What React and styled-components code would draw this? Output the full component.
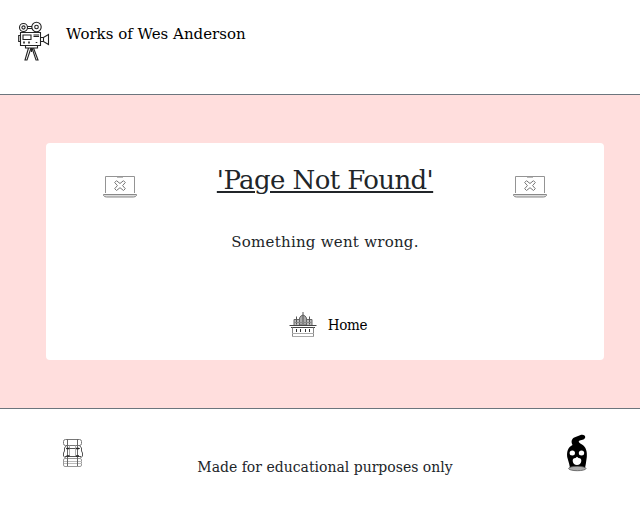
import React from "react";
import styled, { createGlobalStyle } from "styled-components";

const GlobalStyle = createGlobalStyle`
  * { box-sizing: border-box; }
  body {
    margin: 0;
    background: #fff;
    color: #212529;
    font-family: "DejaVu Serif", "Liberation Serif", serif;
  }
`;

const Page = styled.div`
  display: flex;
  flex-direction: column;
  height: 506px;
`;

const Header = styled.header`
  display: flex;
  align-items: flex-start;
  gap: 16px;
  height: 95px;
  padding: 21px 16px 0 18px;
  border-bottom: 1px solid #6c757d;
`;

const Brand = styled.a`
  margin-top: 1px;
  color: #000;
  font-size: 15px;
  line-height: 24px;
  white-space: nowrap;
`;

const Main = styled.main`
  height: 313px;
  padding: 48px 36px 48px 46px;
  background: #ffdedd;
`;

const Card = styled.section`
  display: flex;
  flex-direction: column;
  align-items: center;
  width: 558px;
  height: 217px;
  padding-top: 17px;
  border-radius: 4px;
  background: #fff;
`;

const TitleRow = styled.div`
  display: flex;
  justify-content: space-between;
  align-items: flex-start;
  width: 444px;
  height: 68px;
`;

const Title = styled.h1`
  margin: 0;
  font-size: 26px;
  font-weight: 400;
  line-height: 40px;
  letter-spacing: -0.6px;
  white-space: nowrap;
  text-decoration: underline;
  text-decoration-thickness: 2px;
  text-underline-offset: 2px;
`;

const IconSlot = styled.span`
  display: flex;
  padding-top: ${(p) => p.$top || 0}px;
`;

const Message = styled.p`
  margin: 2px 0 0;
  font-size: 15px;
  line-height: 24px;
  letter-spacing: 0.25px;
  white-space: nowrap;
`;

const HomeLink = styled.a`
  display: flex;
  gap: 11px;
  margin: 58px 0 0 6px;
  color: #000;
  font-family: "DejaVu Serif Condensed", "DejaVu Serif", serif;
  font-stretch: condensed;
  font-size: 15px;
  line-height: 26px;
  letter-spacing: -0.3px;
`;

const Footer = styled.footer`
  display: flex;
  justify-content: space-between;
  height: 98px;
  padding: 0 52px 0 62px;
  border-top: 1px solid #6c757d;
`;

const Notice = styled.p`
  margin: 48px 0 0;
  font-size: 14px;
  line-height: 21px;
  white-space: nowrap;
`;

const CameraIcon = () => (
  <svg width="32" height="40" viewBox="0 0 32 40" fill="none" stroke="#222" strokeWidth="1.1">
    <circle cx="5.500" cy="6.500" r="4" />
    <circle cx="5.500" cy="6.500" r="1.600" />
    <circle cx="18.500" cy="6" r="4.700" />
    <circle cx="18.500" cy="6" r="1.800" />
    <path d="M9.500 5.500h4.500M9.500 7.500h4.500M2.500 11.500H22.500v13H2.500zM2.500 14.500H.7v6h1.800M22.500 16.500h3l5-3v10l-5-3h-3M25.500 16.500v4" />
    <path d="M5 14h8v4.500H5zM15.500 14h5.500M15.500 15.500h5.500" />
    <path d="M7.500 24.500v2.500h12v-2.500M10.500 27 7 39h2l4-12M15.500 27l4.500 12h-2l-4-12M13.500 27v4" />
    <path d="M6 20.500v2M11 20.500v2M18.500 21v1" strokeWidth="1.600" />
  </svg>
);

const LaptopIcon = () => (
  <svg width="34" height="24" viewBox="0 0 34 24" fill="none" stroke="#888" strokeWidth="1">
    <path d="M2.500 18V1.500h29V18" strokeWidth=".9" />
    <path d="M.5 19.500h33v1q-1 1.500-3 1.500h-27q-2 0-3-1.500z" fill="#ddd" />
    <path d="M14 2.500h6" stroke="#bbb" />
    <path d="M11.700 7.500 13.500 5.700 17 8.500l3.500-2.800 1.800 1.800-2.700 3.100 2.700 3.100-1.800 1.800-3.500-2.800-3.500 2.800-1.800-1.800 2.700-3.100z" strokeLinejoin="round" stroke="#777" />
  </svg>
);

const HotelIcon = () => (
  <svg width="28" height="26" viewBox="0 0 28 26" fill="none" stroke="#666" strokeWidth="1">
    <path d="M5 7.500h18v6H5z" fill="#bbb" />
    <path d="M10.500 13V6q1-2.500 3.500-3 2.500.5 3.500 3v7z" fill="#aaa" />
    <path d="M14 0v12M7.500 4.500v8M20.500 4.500v8" stroke="#555" />
    <path d="M5 10.500h18" stroke="#888" />
    <path d="M.5 13.500h27M2 15.500h24" stroke="#444" />
    <path d="M3.500 15.500v9h21v-9" stroke="#888" />
    <path d="M7.500 17v3M11.500 17v3M16.500 17v3M20.500 17v3" stroke="#333" />
    <path d="M3 21.500h22M3 24.500h22" stroke="#aaa" />
  </svg>
);

const BackpackIcon = () => (
  <svg width="22" height="30" viewBox="0 0 22 30" fill="none" stroke="#777" strokeWidth="1">
    <rect x="1.500" y="1.500" width="18" height="6" rx="2" />
    <path d="M4.500 7.500 2.500 10v3l-1 2v3l2 2M17.500 7.500l2 2.500v3l1 2v3l-2 2M4 10.500h14M3 18.500h16" stroke="#555" />
    <rect x="1.500" y="20.500" width="18" height="8" rx="1.500" stroke="#999" />
    <path d="M2 23.500h18M2 25.500h18" stroke="#bbb" />
    <path d="M5.500 1v27M15.500 1v27" stroke="#666" />
    <path d="M7.500 7v11M13.500 7v11" stroke="#999" strokeWidth=".8" />
    <path d="M4.500 10.500h3M14 10.500h3M4.500 18h3M14 18h3" stroke="#222" strokeWidth="1.600" />
  </svg>
);

const SkullIcon = () => (
  <svg width="22" height="38" viewBox="0 0 22 38">
    <path d="M6.500 11C4.500 7 6 4 9.500 3L14 1.200c3-1 5.500 0 5.200 2.300-.7 2.500-4.200 2.300-6.200 3.500-1 1 .5 2 3 3.500 4 2.500 5.300 7 4.800 12.500L19.800 30 19 34H4l-.8-4L1.200 23C.7 17 2 13.500 6.500 11z" fill="#000" />
    <ellipse cx="6.300" cy="19" rx="2.700" ry="2.500" fill="#fff" />
    <ellipse cx="15.500" cy="19" rx="2.700" ry="2.500" fill="#fff" />
    <path d="M11 22.800 9.500 24Q6.500 24 6.700 27q.5 4 4.300 4t4.300-4q.2-3-2.800-3z" fill="#fff" />
    <ellipse cx="11.300" cy="34.500" rx="8.700" ry="2.200" fill="#aaa" stroke="#555" strokeWidth=".8" />
  </svg>
);

export default function App() {
  return (
    <>
      <GlobalStyle />
      <Page>
        <Header>
          <CameraIcon />
          <Brand>Works of Wes Anderson</Brand>
        </Header>
        <Main>
          <Card>
            <TitleRow>
              <IconSlot $top={15}><LaptopIcon /></IconSlot>
              <Title>'Page Not Found'</Title>
              <IconSlot $top={15}><LaptopIcon /></IconSlot>
            </TitleRow>
            <Message>Something went wrong.</Message>
            <HomeLink>
              <HotelIcon />
              <span>Home</span>
            </HomeLink>
          </Card>
        </Main>
        <Footer>
          <IconSlot $top={29}><BackpackIcon /></IconSlot>
          <Notice>Made for educational purposes only</Notice>
          <IconSlot $top={25}><SkullIcon /></IconSlot>
        </Footer>
      </Page>
    </>
  );
}
